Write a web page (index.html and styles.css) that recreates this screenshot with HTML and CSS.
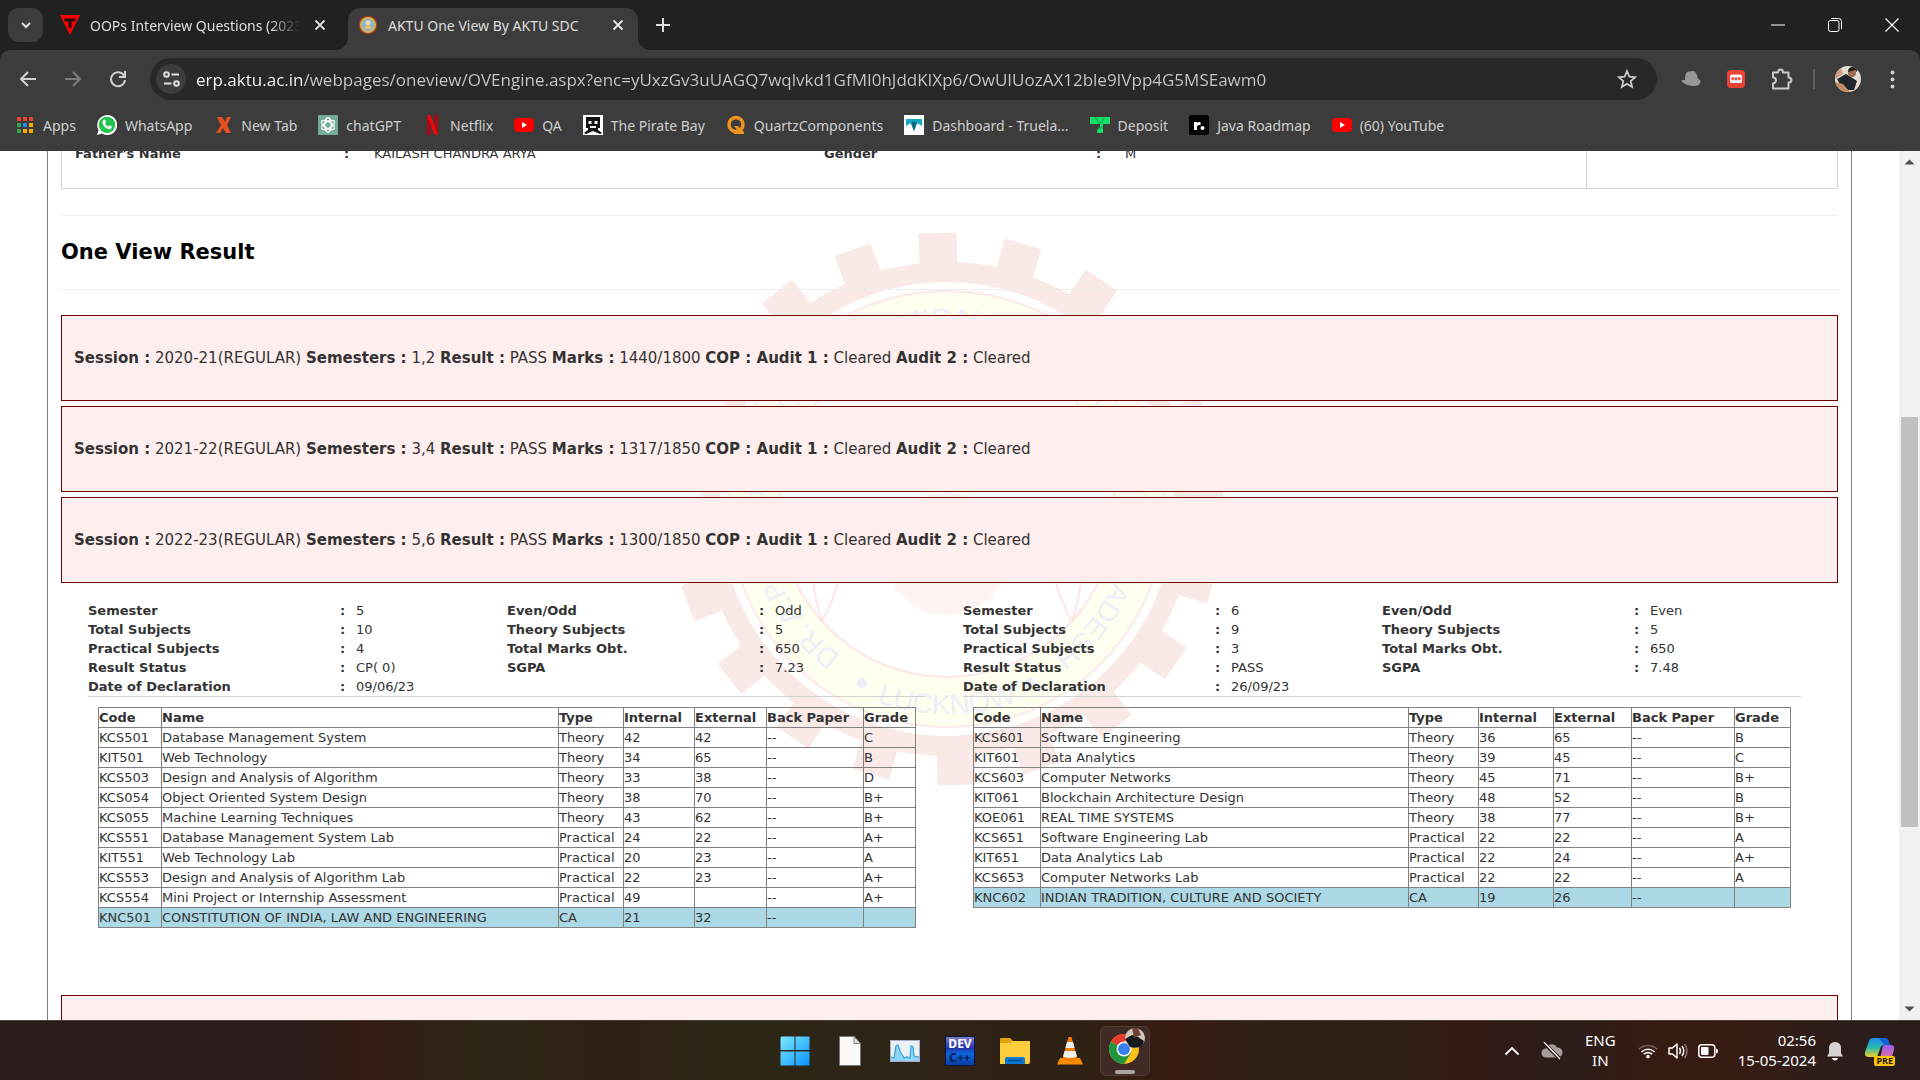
FILE: index.html
```html
<!DOCTYPE html>
<html lang="en">
<head>
<meta charset="utf-8">
<title>AKTU One View By AKTU SDC</title>
<link rel="stylesheet" href="styles.css">
</head>
<body>
<header class="browser">
  <div class="tabstrip">
    <button class="tab-search" aria-label="Search tabs"><svg width="12" height="12" viewBox="0 0 12 12"><path d="M2 4l4 4 4-4" fill="none" stroke="#e3e3e3" stroke-width="2"/></svg></button>
    <div class="tab">
      <svg class="favicon" width="20" height="20" viewBox="0 0 20 20"><path d="M0 0h20L10 20z" fill="#f00"/><path d="M4.500 3.500h11v3h-4V13h-3V6.500h-4z" fill="#20100f"/></svg>
      <span class="tab-title faded">OOPs Interview Questions (2023</span>
      <button class="tab-close" aria-label="Close tab"><svg width="12" height="12" viewBox="0 0 12 12"><path d="M1.500 1.500l9 9m0-9l-9 9" stroke="#dedede" stroke-width="1.800"/></svg></button>
    </div>
    <div class="tab active">
      <svg class="favicon" width="20" height="20" viewBox="0 0 20 20"><circle cx="10" cy="10" r="9.500" fill="#9a3d20"/><circle cx="10" cy="10" r="8" fill="#d8b45a"/><circle cx="10" cy="10" r="6" fill="#7fb9e0"/><circle cx="10" cy="8" r="2.500" fill="#f4d9a0"/><path d="M7 14q0-4 3-4t3 4z" fill="#f0c060"/></svg>
      <span class="tab-title">AKTU One View By AKTU SDC</span>
      <button class="tab-close" aria-label="Close tab"><svg width="12" height="12" viewBox="0 0 12 12"><path d="M1.500 1.500l9 9m0-9l-9 9" stroke="#e8e8e8" stroke-width="1.800"/></svg></button>
    </div>
    <button class="new-tab" aria-label="New tab"><svg width="14" height="14" viewBox="0 0 14 14"><path d="M7 0v14M0 7h14" stroke="#dedede" stroke-width="2"/></svg></button>
    <div class="window-buttons">
      <button aria-label="Minimize"><svg width="14" height="14" viewBox="0 0 14 14"><path d="M0 7h14" stroke="#fff"/></svg></button>
      <button aria-label="Restore"><svg width="14" height="14" viewBox="0 0 14 14"><rect x=".5" y="2.500" width="10.500" height="11" rx="2" fill="none" stroke="#fff"/><path d="M3 .5h7.500q3 0 3 3V11" fill="none" stroke="#fff"/></svg></button>
      <button aria-label="Close"><svg width="14" height="14" viewBox="0 0 14 14"><path d="M.5.5l13 13m0-13l-13 13" stroke="#fff" stroke-width="1.200"/></svg></button>
    </div>
  </div>
  <div class="toolbar">
    <div class="nav-buttons">
      <button aria-label="Back"><svg width="18" height="18" viewBox="0 0 18 18"><path d="M17 9H2m7-7L2 9l7 7" fill="none" stroke="#d0d0d0" stroke-width="2"/></svg></button>
      <button aria-label="Forward"><svg width="18" height="18" viewBox="0 0 18 18"><path d="M1 9h15M9 2l7 7-7 7" fill="none" stroke="#7c7c7c" stroke-width="2"/></svg></button>
      <button aria-label="Reload"><svg width="18" height="18" viewBox="0 0 18 18"><path d="M15 5.500A7 7 0 1 0 16 10" fill="none" stroke="#d0d0d0" stroke-width="2"/><path d="M16 1v6h-6" fill="none" stroke="#d0d0d0" stroke-width="2"/></svg></button>
    </div>
    <div class="omnibox">
      <button class="site-info" aria-label="View site information"><svg width="17" height="16" viewBox="0 0 17 16"><g fill="none" stroke="#e0e0e0" stroke-width="2"><circle cx="3.500" cy="3.500" r="2.300"/><path d="M8.500 3.500H16M1 12.500h7.500"/><circle cx="13.500" cy="12.500" r="2.300"/></g></svg></button>
      <input class="url" type="text" aria-label="Address" value="erp.aktu.ac.in/webpages/oneview/OVEngine.aspx?enc=yUxzGv3uUAGQ7wqlvkd1GfMI0hJddKIXp6/OwUIUozAX12ble9IVpp4G5MSEawm0">
      <button class="star" aria-label="Bookmark this tab"><svg width="20" height="20" viewBox="0 0 20 20"><path d="M10 2l2.300 5.600 6 .5-4.600 3.900 1.400 5.900L10 14.700l-5.100 3.200L6.300 12 1.700 8.100l6-.5z" fill="none" stroke="#cfcfcf" stroke-width="1.700"/></svg></button>
    </div>
    <div class="extensions">
      <button aria-label="Hat extension"><svg width="20" height="18" viewBox="0 0 20 18"><path d="M4 10C4 5 5 2 8 1.500q4-1 6 0Q16 4 17 9q3 1 2.500 3.500Q18 16.500 12 16 4 15.500.5 11 .500 9.500 4 10z" fill="#979797"/></svg></button>
      <button aria-label="Red extension"><svg width="18" height="18" viewBox="0 0 18 18"><rect width="18" height="18" rx="4" fill="#ea4335"/><rect x="3" y="4.500" width="12" height="8.500" rx="2" fill="#fff"/><path d="M4.500 8.800h9" stroke="#ea4335" stroke-width="3" stroke-dasharray="2.400 .9"/></svg></button>
      <button aria-label="Extensions"><svg width="22" height="22" viewBox="0 0 22 22"><path d="M2 4.500h5q0-3 2.500-3t2.500 3h5.500v5q3 0 3 2.500t-3 2.500v6H2v-5q3-.5 3-3.200T2 9.200z" fill="none" stroke="#cbcbcb" stroke-width="2" stroke-linejoin="round"/></svg></button>
      <span class="separator"></span>
      <button aria-label="Profile"><svg width="26" height="26" viewBox="0 0 26 26"><clipPath id="face"><circle cx="13" cy="13" r="13"/></clipPath><g clip-path="url(#face)"><path d="M0 0h26v26H0z" fill="#e6dcd3"/><path d="M0 7l6-5 2 6-8 5z" fill="#cf9c84"/><path d="M2 13l9-5 5 3 6 4-3 9H8z" fill="#20242b"/><circle cx="17" cy="7" r="4" fill="#9c6c52"/><path d="M13 6q0-5 5-5t4 5l-2-2z" fill="#221914"/><path d="M0 16l8 2 7 8H3z" fill="#c58a62"/></g></svg></button>
      <button class="menu" aria-label="Menu"><svg width="5" height="19" viewBox="0 0 5 19"><g fill="#d0d0d0"><circle cx="2.500" cy="2.500" r="2"/><circle cx="2.500" cy="9.500" r="2"/><circle cx="2.500" cy="16.500" r="2"/></g></svg></button>
    </div>
  </div>
  <nav class="bookmarks" aria-label="Bookmarks">
    <a href="#"><svg width="20" height="20" viewBox="0 0 20 20"><path d="M2 2h4v4H2zM8 2h4v4H8zM14 2h4v4h-4z" fill="#ea4335"/><path d="M2 8h4v4H2zM2 14h4v4H2z" fill="#34a853"/><path d="M8 8h4v4H8z" fill="#1a8cff"/><path d="M14 8h4v4h-4zM8 14h4v4H8zM14 14h4v4h-4z" fill="#f9ab00"/></svg>Apps</a>
    <a href="#"><svg width="20" height="20" viewBox="0 0 20 20"><path d="M0 20l1.500-5A10 10 0 1 1 5 18.600z" fill="#fff"/><circle cx="10" cy="9.900" r="8.200" fill="#25c44f"/><path d="M6.500 5q1.500-1 2 .5l.6 1.500-1 1.500q1 2 3.200 3l1.300-1.300 2.200 1q.4 2-1.500 2.800-2.800.8-6-2.500Q4.200 7.500 6.500 5z" fill="#fff"/></svg>WhatsApp</a>
    <a href="#"><svg width="20" height="20" viewBox="0 0 20 20"><path d="M4 2h5l3 5 2-5h4l-4 8 4 8h-5l-3-5-3 5H3l5-8z" fill="#e8501e"/></svg>New Tab</a>
    <a href="#"><svg width="20" height="20" viewBox="0 0 20 20"><rect width="20" height="20" rx="1" fill="#74aa9c"/><g fill="none" stroke="#fff" stroke-width="1.200"><ellipse cx="10" cy="10" rx="3.300" ry="7.300"/><ellipse cx="10" cy="10" rx="3.300" ry="7.300" transform="rotate(60 10 10)"/><ellipse cx="10" cy="10" rx="3.300" ry="7.300" transform="rotate(120 10 10)"/></g></svg>chatGPT</a>
    <a href="#"><svg width="20" height="20" viewBox="0 0 20 20"><path d="M5 0h3.500v20H5zM12.500 0H16v20h-3.500z" fill="#b1060f"/><path d="M5 0h3.500L16 20h-3.500z" fill="#e50914"/></svg>Netflix</a>
    <a href="#"><svg width="20" height="20" viewBox="0 0 20 20"><rect y="3" width="20" height="14" rx="4" fill="#f00"/><path d="M8 7l5 3-5 3z" fill="#fff"/></svg>QA</a>
    <a href="#"><svg width="20" height="20" viewBox="0 0 20 20"><path d="M0 0h20v20H0z" fill="#fff"/><path d="M3 2h14v11h-2v2l4 3-2 1-7-3-7 3-2-1 4-3v-2H3z" fill="#111"/><path d="M5.500 6h3v3h-3zM11.500 6h3v3h-3zM7 11h6v2H7z" fill="#eee"/></svg>The Pirate Bay</a>
    <a href="#"><svg width="20" height="20" viewBox="0 0 20 20"><circle cx="10" cy="9.500" r="7" fill="none" stroke="#f0921e" stroke-width="3.500"/><path d="M8 11h4l6 6v2H8v-2h5z" fill="#f0921e"/></svg>QuartzComponents</a>
    <a href="#"><svg width="20" height="20" viewBox="0 0 20 20"><path d="M0 0h20v20H0z" fill="#fff"/><path d="M2 4h16v7l-5-3-3 8-3-8-5 3z" fill="#12a8c4"/><path d="M7 8l3-2 3 2-3 8z" fill="#086b80"/></svg>Dashboard - Truela...</a>
    <a href="#"><svg width="20" height="20" viewBox="0 0 20 20"><path d="M0 2h20v7h-7v9H7v-3l3-3V9H0z" fill="#12df63"/><path d="M5 2l5 7 4-5M8 13h5" stroke="#0a9c45" fill="none"/></svg>Deposit</a>
    <a href="#"><svg width="20" height="20" viewBox="0 0 20 20"><rect width="20" height="20" rx="2" fill="#000"/><path d="M5 15V7h3v1q1-1.500 3.500-1v3Q8 9.500 8 12v3z" fill="#fff"/><circle cx="13.500" cy="13" r="2" fill="#fff"/></svg>Java Roadmap</a>
    <a href="#"><svg width="20" height="20" viewBox="0 0 20 20"><rect y="3" width="20" height="14" rx="4" fill="#f00"/><path d="M8 7l5 3-5 3z" fill="#fff"/></svg>(60) YouTube</a>
  </nav>
</header>

<div class="viewport">
  <main class="page">
    <svg class="emblem" width="560" height="560" viewBox="-280 -280 560 560" aria-hidden="true">
      <defs>
        <path id="tooth" d="M-19-276h38v36h-38z"/>
        <g id="teeth"><use href="#tooth"/><use href="#tooth" transform="rotate(18)"/><use href="#tooth" transform="rotate(36)"/><use href="#tooth" transform="rotate(54)"/><use href="#tooth" transform="rotate(72)"/></g>
        <path id="arc-top" d="M0 181A181 181 0 0 1 0-181 181 181 0 0 1 0 181"/>
        <path id="arc-bottom" d="M-205 0A205 205 0 0 0 205 0"/>
      </defs>
      <g transform="rotate(-2)" fill="#f9e9e7"><use href="#teeth"/><use href="#teeth" transform="rotate(90)"/><use href="#teeth" transform="rotate(180)"/><use href="#teeth" transform="rotate(270)"/></g>
      <circle r="237" fill="none" stroke="#f9e9e7" stroke-width="20"/>
      <circle r="193" fill="none" stroke="#feffee" stroke-width="50"/>
      <circle r="218" fill="none" stroke="#fde8e8" stroke-width="2"/>
      <circle r="168" fill="none" stroke="#fde6e6" stroke-width="2"/>
      <circle cy="45" r="61" fill="#fff4f1"/>
      <path d="M-135 60q2 30 10 52 12-20 20-52M135 60q-2 30-10 52-12-20-20-52" fill="none" stroke="#fde6e6" stroke-width="2"/>
      <g class="emblem-text" fill="#eeeef9">
        <text><textPath href="#arc-top" startOffset="50%" text-anchor="middle">DR. A.P.J. ABDUL KALAM TECHNICAL UNIVERSITY UTTAR PRADESH</textPath></text>
        <text><textPath href="#arc-bottom" startOffset="50%" text-anchor="middle">LUCKNOW</textPath></text>
        <circle cx="-85" cy="174" r="5"/><circle cx="83" cy="174" r="5"/>
      </g>
    </svg>

    <section class="student">
      <div class="student-fields">
        <b>Father's Name</b><b>:</b><span>KAILASH CHANDRA ARYA</span>
        <b>Gender</b><b>:</b><span>M</span>
      </div>
      <div class="photo"></div>
    </section>

    <h1>One View Result</h1>

    <section class="sessions">
      <div class="session"><b>Session :</b> 2020-21(REGULAR) <b>Semesters :</b> 1,2 <b>Result :</b> PASS <b>Marks :</b> 1440/1800 <b>COP : Audit 1 :</b> Cleared <b>Audit 2 :</b> Cleared</div>
      <div class="session"><b>Session :</b> 2021-22(REGULAR) <b>Semesters :</b> 3,4 <b>Result :</b> PASS <b>Marks :</b> 1317/1850 <b>COP : Audit 1 :</b> Cleared <b>Audit 2 :</b> Cleared</div>
      <div class="session"><b>Session :</b> 2022-23(REGULAR) <b>Semesters :</b> 5,6 <b>Result :</b> PASS <b>Marks :</b> 1300/1850 <b>COP : Audit 1 :</b> Cleared <b>Audit 2 :</b> Cleared</div>
    </section>

    <section class="semesters">
      <article class="semester">
        <table class="summary">
          <colgroup><col class="s-label"><col class="s-colon"><col class="s-value"><col class="s-label"><col class="s-colon"><col></colgroup>
          <tr><th>Semester</th><th>:</th><td>5</td><th>Even/Odd</th><th>:</th><td>Odd</td></tr>
          <tr><th>Total Subjects</th><th>:</th><td>10</td><th>Theory Subjects</th><th>:</th><td>5</td></tr>
          <tr><th>Practical Subjects</th><th>:</th><td>4</td><th>Total Marks Obt.</th><th>:</th><td>650</td></tr>
          <tr><th>Result Status</th><th>:</th><td>CP( 0)</td><th>SGPA</th><th>:</th><td>7.23</td></tr>
          <tr><th>Date of Declaration</th><th>:</th><td>09/06/23</td></tr>
        </table>
        <table class="marks odd">
          <colgroup><col class="code"><col><col class="type"><col class="internal"><col class="external"><col class="back"><col class="grade"></colgroup>
          <thead><tr><th>Code</th><th>Name</th><th>Type</th><th>Internal</th><th>External</th><th>Back Paper</th><th>Grade</th></tr></thead>
          <tbody>
            <tr><td>KCS501</td><td>Database Management System</td><td>Theory</td><td>42</td><td>42</td><td>--</td><td>C</td></tr>
            <tr><td>KIT501</td><td>Web Technology</td><td>Theory</td><td>34</td><td>65</td><td>--</td><td>B</td></tr>
            <tr><td>KCS503</td><td>Design and Analysis of Algorithm</td><td>Theory</td><td>33</td><td>38</td><td>--</td><td>D</td></tr>
            <tr><td>KCS054</td><td>Object Oriented System Design</td><td>Theory</td><td>38</td><td>70</td><td>--</td><td>B+</td></tr>
            <tr><td>KCS055</td><td>Machine Learning Techniques</td><td>Theory</td><td>43</td><td>62</td><td>--</td><td>B+</td></tr>
            <tr><td>KCS551</td><td>Database Management System Lab</td><td>Practical</td><td>24</td><td>22</td><td>--</td><td>A+</td></tr>
            <tr><td>KIT551</td><td>Web Technology Lab</td><td>Practical</td><td>20</td><td>23</td><td>--</td><td>A</td></tr>
            <tr><td>KCS553</td><td>Design and Analysis of Algorithm Lab</td><td>Practical</td><td>22</td><td>23</td><td>--</td><td>A+</td></tr>
            <tr><td>KCS554</td><td>Mini Project or Internship Assessment</td><td>Practical</td><td>49</td><td></td><td>--</td><td>A+</td></tr>
            <tr class="audit"><td>KNC501</td><td>CONSTITUTION OF INDIA, LAW AND ENGINEERING</td><td>CA</td><td>21</td><td>32</td><td>--</td><td></td></tr>
          </tbody>
        </table>
      </article>
      <article class="semester">
        <table class="summary">
          <colgroup><col class="s-label"><col class="s-colon"><col class="s-value"><col class="s-label"><col class="s-colon"><col></colgroup>
          <tr><th>Semester</th><th>:</th><td>6</td><th>Even/Odd</th><th>:</th><td>Even</td></tr>
          <tr><th>Total Subjects</th><th>:</th><td>9</td><th>Theory Subjects</th><th>:</th><td>5</td></tr>
          <tr><th>Practical Subjects</th><th>:</th><td>3</td><th>Total Marks Obt.</th><th>:</th><td>650</td></tr>
          <tr><th>Result Status</th><th>:</th><td>PASS</td><th>SGPA</th><th>:</th><td>7.48</td></tr>
          <tr><th>Date of Declaration</th><th>:</th><td>26/09/23</td></tr>
        </table>
        <table class="marks even">
          <colgroup><col class="code"><col><col class="type"><col class="internal"><col class="external"><col class="back"><col class="grade"></colgroup>
          <thead><tr><th>Code</th><th>Name</th><th>Type</th><th>Internal</th><th>External</th><th>Back Paper</th><th>Grade</th></tr></thead>
          <tbody>
            <tr><td>KCS601</td><td>Software Engineering</td><td>Theory</td><td>36</td><td>65</td><td>--</td><td>B</td></tr>
            <tr><td>KIT601</td><td>Data Analytics</td><td>Theory</td><td>39</td><td>45</td><td>--</td><td>C</td></tr>
            <tr><td>KCS603</td><td>Computer Networks</td><td>Theory</td><td>45</td><td>71</td><td>--</td><td>B+</td></tr>
            <tr><td>KIT061</td><td>Blockchain Architecture Design</td><td>Theory</td><td>48</td><td>52</td><td>--</td><td>B</td></tr>
            <tr><td>KOE061</td><td>REAL TIME SYSTEMS</td><td>Theory</td><td>38</td><td>77</td><td>--</td><td>B+</td></tr>
            <tr><td>KCS651</td><td>Software Engineering Lab</td><td>Practical</td><td>22</td><td>22</td><td>--</td><td>A</td></tr>
            <tr><td>KIT651</td><td>Data Analytics Lab</td><td>Practical</td><td>22</td><td>24</td><td>--</td><td>A+</td></tr>
            <tr><td>KCS653</td><td>Computer Networks Lab</td><td>Practical</td><td>22</td><td>22</td><td>--</td><td>A</td></tr>
            <tr class="audit"><td>KNC602</td><td>INDIAN TRADITION, CULTURE AND SOCIETY</td><td>CA</td><td>19</td><td>26</td><td>--</td><td></td></tr>
          </tbody>
        </table>
      </article>
    </section>

    <div class="session"></div>
  </main>
  <div class="scrollbar" aria-hidden="true">
    <svg width="21" height="21" viewBox="0 0 21 21"><path d="M5.500 13.500h10l-5-5z" fill="#505050"/></svg>
    <div class="track"><div class="thumb"></div></div>
    <svg width="21" height="21" viewBox="0 0 21 21"><path d="M5.500 7.500h10l-5 5z" fill="#505050"/></svg>
  </div>
</div>

<footer class="taskbar">
  <nav class="apps" aria-label="Taskbar">
    <button aria-label="Start"><svg width="30" height="30" viewBox="0 0 30 30"><defs><linearGradient id="win" x1="0" y1="0" x2="1" y2="1"><stop offset="0" stop-color="#7cecff"/><stop offset="1" stop-color="#0a90ff"/></linearGradient></defs><path d="M1.500.5H14.500V14H.5V1.500zM15.500.5H29.500V14H15.500zM.5 15.500H14.500V29.500H.5zM15.500 15.500H29.500V29.500H15.500z" fill="url(#win)"/></svg></button>
    <button aria-label="Document"><svg width="22" height="30" viewBox="0 0 22 30"><path d="M.5.5H15l6.500 7v22H.5z" fill="#fafafa" stroke="#777"/><path d="M15 .5V7.500h6.500z" fill="#ddd" stroke="#888"/></svg></button>
    <button aria-label="Performance"><svg width="30" height="22" viewBox="0 0 30 22"><path d="M0 0h30v22H0z" fill="#e9f1f5"/><path d="M1 17l3 1 2-12 2-1 2 6 4 7 3-1 3 1 1-12 2 1 1 9 5 1v5H1z" fill="#8fd3f7"/><path d="M1 17l3 1 2-12 2-1 2 6 4 7 3-1 3 1 1-12 2 1 1 9 5 1" fill="none" stroke="#38a2dc" stroke-width="1.200"/><path d="M.5.5h29v21H.5z" fill="none" stroke="#aac"/></svg></button>
    <button aria-label="Dev-C++" class="dev"><span>DEV</span><span class="cpp">C++</span></button>
    <button aria-label="File Explorer"><svg width="30" height="28" viewBox="0 0 30 28"><path d="M0 2q0-1 1-1h9l3 3v6H0z" fill="#e2a30c"/><path d="M0 6h10l3-2h17v21q0 2-2 2H0z" fill="#ffcd3c"/><path d="M5 27v-5q0-2 2-2h16q2 0 2 2v5z" fill="#0a78d0"/><path d="M8 23.500h14" stroke="#054f92" stroke-width="1.500"/></svg></button>
    <button aria-label="VLC"><svg width="26" height="30" viewBox="0 0 26 30"><path d="M3 22h20l3 6.500H0z" fill="#ff8b00"/><path d="M11.500 1h3l6 22q-7 4-15 0z" fill="#f57c00"/><path d="M10 6h6l1.600 6H8.400zM7.500 15h11l1.500 5.500q-7 3-14 0z" fill="#efefef"/></svg></button>
    <button aria-label="Google Chrome" class="running"><svg width="38" height="38" viewBox="0 0 38 38"><g transform="translate(16 22)"><circle r="15" fill="#fbc116"/><path d="M0 0L-13-7.500A15 15 0 0 0 0 15L7 4z" fill="#22953f"/><path d="M0 0L-13-7.500A15 15 0 0 1 13-7.500H0z" fill="#e33b2e"/><circle r="7.500" fill="#fff"/><circle r="6" fill="#3b7ded"/></g><circle cx="27" cy="11" r="10" fill="#d4c8bf"/><path d="M17 12l7-4 6 2 6 4-2 5q-6 3-12 1z" fill="#15181f"/><path d="M24 1l6 0 3 7-7 3z" fill="#6a4334"/></svg></button>
  </nav>
  <div class="tray">
    <button class="chevron" aria-label="Show hidden icons"><svg width="16" height="10" viewBox="0 0 16 10"><path d="M1.500 8.500L8 2l6.500 6.500" fill="none" stroke="#fff" stroke-width="1.800"/></svg></button>
    <svg class="cloud" width="22" height="18" viewBox="0 0 22 18"><path d="M5 15.500a4.500 4.500 0 0 1 0-9 6 6 0 0 1 11-1 5 5 0 0 1 1 10z" fill="#a49d9b"/><path d="M2 0l17 17" stroke="#301a15" stroke-width="3.500"/><path d="M3 0l16 17" stroke="#fff" stroke-width="1.300"/></svg>
    <span class="lang">ENG<br>IN</span>
    <svg class="wifi" width="20" height="16" viewBox="0 0 20 16"><g fill="none" stroke-width="1.500"><path d="M.800 6.200a13 13 0 0 1 18.400 0" stroke="#775f58"/><path d="M3.500 9a9.200 9.200 0 0 1 13 0" stroke="#fff"/><path d="M5.800 11.300a6 6 0 0 1 8.400 0" stroke="#fff"/></g><circle cx="10" cy="13.500" r="1.800" fill="#fff"/></svg>
    <svg class="speaker" width="20" height="18" viewBox="0 0 20 18"><path d="M1 6h3.500L9 2v14l-4.500-4H1z" fill="none" stroke="#fff" stroke-width="1.500" stroke-linejoin="round"/><path d="M11.500 6q2 3 0 6M14 4q3.500 5 0 10" fill="none" stroke="#fff" stroke-width="1.400"/><path d="M16.500 2q5 7 0 14" fill="none" stroke="#8d7973" stroke-width="1.400"/></svg>
    <svg class="battery" width="20" height="14" viewBox="0 0 20 14"><rect x=".8" y=".8" width="16" height="12.400" rx="3" fill="none" stroke="#fff" stroke-width="1.500"/><rect x="3" y="3" width="7.500" height="8" rx="1" fill="#fff"/><path d="M18 4.500q2 0 2 2.500t-2 2.500z" fill="#fff"/></svg>
    <time class="clock">02:56<br>15-05-2024</time>
    <svg class="bell" width="18" height="20" viewBox="0 0 18 20"><path d="M9 1q6 0 6 6.500V12l2 3.500H1L3 12V7.500Q3 1 9 1z" fill="#d8d3d2"/><path d="M6 17h6q-.5 2.500-3 2.500T6 17z" fill="#fff"/></svg>
    <div class="copilot">
      <svg width="30" height="28" viewBox="0 0 30 28"><defs><linearGradient id="cpa" x1="0" y1="0" x2="0" y2="1"><stop offset="0" stop-color="#1d8ef2"/><stop offset=".5" stop-color="#27b8b0"/><stop offset="1" stop-color="#f5d21f"/></linearGradient><linearGradient id="cpb" x1="0" y1="0" x2="0" y2="1"><stop offset="0" stop-color="#9a5bf3"/><stop offset="1" stop-color="#fd8069"/></linearGradient></defs><path d="M8 1h11q3 0 4 4l1 3h-5q-3 0-4 4l-3 8H4q-5 0-4-5L4 4q1-3 4-3z" fill="url(#cpa)"/><path d="M14 1h6q3 0 4 4l1 3h-6z" fill="#1462d8"/><path d="M19 8h7q4 0 3 5l-3 10q-1 4-5 4h-9q2 0 3-5l2-9q1-5 2-5z" fill="url(#cpb)"/></svg>
      <span class="pre">PRE</span>
    </div>
  </div>
</footer>
</body>
</html>
```

FILE: styles.css
```css
* { box-sizing: border-box; }

body {
  margin: 0;
  height: 100vh;
  display: flex;
  flex-direction: column;
  overflow: hidden;
  background: #fff;
  color: #333;
  font-family: "DejaVu Sans", Verdana, sans-serif;
  font-size: 13px;
}

button {
  border: 0;
  padding: 0;
  background: none;
  color: inherit;
  font: inherit;
  display: flex;
  align-items: center;
  justify-content: center;
}

svg { display: block; flex: none; }

/* Browser chrome */
.browser {
  background: #202221;
  color: #dedede;
  font-family: "Noto Sans", "Open Sans", sans-serif;
  font-size: 14px;
}

.tabstrip {
  height: 50px;
  padding: 8px 0 0 8px;
  display: flex;
}

.tab-search {
  width: 35px;
  height: 34px;
  border-radius: 11px;
  background: #3c3c3c;
}

.tab {
  width: 290px;
  height: 42px;
  margin-left: 5px;
  padding: 0 8px 8px 12px;
  display: flex;
  align-items: center;
  gap: 10px;
}

.tab.active {
  position: relative;
  margin-left: 10px;
  padding: 0 10px 8px;
  border-radius: 12px 12px 0 0;
  background: #3c3c3c;
}

.tab.active::before,
.tab.active::after {
  content: "";
  position: absolute;
  bottom: 0;
  width: 12px;
  height: 12px;
}

.tab.active::before {
  right: 100%;
  background: radial-gradient(circle at 0 0, transparent 12px, #3c3c3c 12px);
}

.tab.active::after {
  left: 100%;
  background: radial-gradient(circle at 100% 0, transparent 12px, #3c3c3c 12px);
}

.tab-title {
  flex: 1;
  overflow: hidden;
  white-space: nowrap;
}

.faded {
  -webkit-mask-image: linear-gradient(to right, #000 85%, transparent);
  mask-image: linear-gradient(to right, #000 85%, transparent);
}

.tab-close { width: 20px; height: 20px; }

.new-tab {
  width: 30px;
  height: 34px;
  margin-left: 10px;
}

.window-buttons {
  margin-left: auto;
  display: flex;
}

.window-buttons button {
  width: 57px;
  height: 34px;
}

.toolbar {
  height: 51px;
  padding: 8px 25px 0 10px;
  display: flex;
  align-items: flex-start;
  background: #3c3c3c;
  border-radius: 10px 10px 0 0;
}

.nav-buttons {
  width: 140px;
  height: 42px;
  display: flex;
  align-items: center;
  gap: 9px;
}

.nav-buttons button { width: 36px; height: 36px; }

.omnibox {
  flex: 1;
  height: 42px;
  padding: 0 20px 0 6px;
  display: flex;
  align-items: center;
  gap: 10px;
  background: #282828;
  border-radius: 21px;
}

.site-info {
  width: 30px;
  height: 30px;
  border-radius: 50%;
  background: #3c3c3c;
}

.url {
  flex: 1;
  min-width: 0;
  padding: 0;
  border: 0;
  outline: 0;
  color: transparent;
  background: linear-gradient(to right, #fff 106px, #c9c9c9 106px);
  -webkit-background-clip: text;
  background-clip: text;
  font-family: "Open Sans", "Noto Sans", sans-serif;
  font-size: 17px;
}

.extensions {
  height: 42px;
  padding-left: 24px;
  display: flex;
  align-items: center;
  gap: 26px;
}

.menu { margin-left: 3px; }

.separator {
  width: 2px;
  height: 20px;
  margin: 0 -6px;
  background: #606060;
}

.bookmarks {
  height: 50px;
  padding: 0 15px 2px;
  display: flex;
  align-items: center;
  gap: 21px;
  background: #3c3c3c;
}

.bookmarks a {
  display: flex;
  align-items: center;
  gap: 8px;
  white-space: nowrap;
  color: #cfcfcf;
  text-decoration: none;
}

/* Page */
.viewport {
  flex: 1;
  min-height: 0;
  display: flex;
  overflow: hidden;
}

.page {
  flex: 1;
  position: relative;
  margin: -10px 47px 0;
  padding: 0 13px;
  border: 1px solid #808080;
  border-width: 0 1px;
}

.emblem {
  position: absolute;
  top: 88px;
  left: 50%;
  margin-left: -283px;
  z-index: -1;
}

.emblem-text {
  font-family: "Liberation Sans", Arial, sans-serif;
  font-size: 28px;
}

.student {
  height: 48px;
  display: flex;
  border: 1px solid #d3d3d3;
  border-top: 0;
}

.student-fields {
  flex: 1;
  padding-left: 13px;
  display: grid;
  grid-template-columns: 269px 30px 450px 272px 29px 1fr;
  line-height: 26px;
}

.photo {
  width: 251px;
  border-left: 1px solid #d3d3d3;
}

h1 {
  margin: 26px 0 25px;
  border: 1px solid #eee;
  border-width: 1px 0;
  color: #000;
  font-size: 21px;
  line-height: 73px;
}

.session {
  height: 86px;
  padding: 0 12px;
  border: 1px solid #700000;
  background: #ffeeee;
  font-size: 15px;
  line-height: 84px;
}

.sessions {
  display: grid;
  gap: 5px;
}

.semesters {
  padding: 18px 37px 0 27px;
  display: grid;
  grid-template-columns: 1fr 1fr;
  gap: 37px;
  margin-bottom: 57px;
}

table {
  border-collapse: collapse;
  table-layout: fixed;
}

th, td {
  padding: 0;
  text-align: left;
  white-space: nowrap;
}

.summary {
  width: 100%;
  line-height: 19px;
  border-bottom: 1px solid #d3d3d3;
}

.s-label { width: 252px; }
.s-colon { width: 16px; }
.s-value { width: 151px; }

.marks {
  width: calc(100% - 20px);
  margin: 10px;
  line-height: 19px;
}

.marks th, .marks td {
  border: 1px solid #808080;
}

.odd .code { width: 63px; }
.odd .type { width: 65px; }
.odd .internal { width: 71px; }
.odd .external { width: 72px; }
.odd .back { width: 97px; }
.odd .grade { width: 52px; }

.even .code { width: 67px; }
.even .type { width: 70px; }
.even .internal { width: 75px; }
.even .external { width: 78px; }
.even .back { width: 103px; }
.even .grade { width: 56px; }

.audit { background: #add8e6; }

.scrollbar {
  width: 21px;
  display: flex;
  flex-direction: column;
  background: #f1f1f1;
}

.track {
  flex: 1;
  padding: 245px 2px 0;
}

.thumb {
  height: 410px;
  background: #c1c1c1;
}

/* Taskbar */
.taskbar {
  height: 60px;
  border-top: 1px solid #474039;
  display: grid;
  grid-template-columns: 1fr auto 1fr;
  align-items: center;
  color: #fff;
  font-family: "Noto Sans", "Open Sans", sans-serif;
  font-size: 15px;
  background: linear-gradient(to right, #2a1d1b 0 16%, #351b14 19%, #2f2316 23%, #2d2617 26%, #2f2115 32%, #2c2717 38%, #2e2316 50%, #2e2115 56%, #381b13 61%, #2f2115 66%, #2e2216 72%, #351a13 76%, #2b1d1b 81%, #361b13 86%, #361c13 91%, #2b1d1b 96%);
}

.apps {
  grid-column: 2;
  display: flex;
  gap: 5px;
}

.apps button {
  width: 50px;
  height: 50px;
}

.apps .running {
  position: relative;
  padding: 0 0 10px 4px;
  border: 1px solid #503a36;
  border-radius: 6px;
  background: #402a26;
}

.running::after {
  content: "";
  position: absolute;
  bottom: 1px;
  left: 14px;
  width: 20px;
  height: 4px;
  border-radius: 2px;
  background: #a9a3a1;
}

.apps .dev {
  width: 30px;
  height: 30px;
  margin: 10px;
  flex-direction: column;
  border: 1px solid #0a1540;
  background: linear-gradient(#7e79c8, #2434a8 40%, #0a68e0 60%, #0a3ba0);
  font-size: 12px;
  font-weight: bold;
  line-height: 14px;
}

.cpp { color: #071c50; }

.tray {
  display: flex;
  align-items: center;
  justify-content: flex-end;
  padding-right: 25px;
}

.cloud { margin-left: 21px; }
.lang { margin-left: 22px; text-align: center; }
.wifi { margin-left: 22px; }
.speaker, .battery { margin-left: 10px; }
.clock { margin-left: 20px; text-align: right; }
.bell { margin-left: 10px; }
.lang, .clock { line-height: 20px; padding-bottom: 2px; }

.copilot {
  position: relative;
  margin-left: 21px;
}

.pre {
  position: absolute;
  right: 0;
  bottom: -1px;
  padding: 0 2px;
  border-radius: 2px;
  background: #ffc200;
  color: #221a00;
  font-size: 9px;
  font-weight: bold;
  line-height: 10px;
}
```
